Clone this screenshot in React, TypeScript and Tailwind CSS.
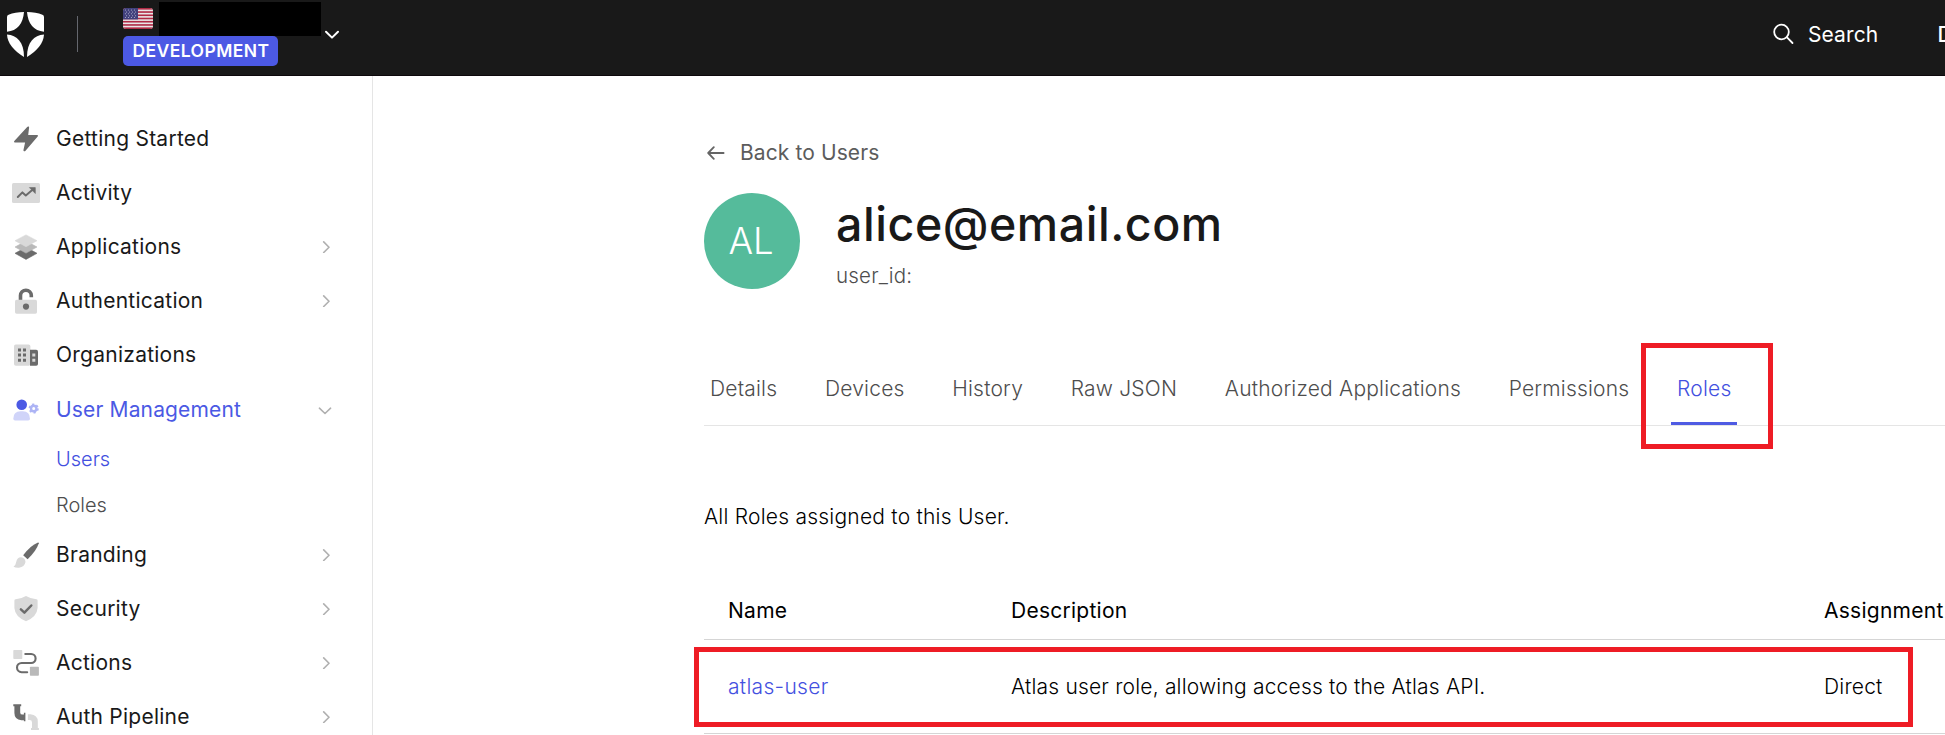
import type { ReactNode } from "react";

const DARK = "#6b6b6b";
const MID = "#b9b9b9";
const LIGHT = "#d9d9d9";

function Icon({ children }: { children: ReactNode }) {
  return (
    <svg width="26" height="26" viewBox="0 0 26 26" fill="none" className="shrink-0 overflow-visible">
      {children}
    </svg>
  );
}

const icons: Record<string, ReactNode> = {
  bolt: (
    <path
      d="M14.2 .9Q14.8 .2 15.5 .5T16.1 1.4L15.2 9H24.2Q25.6 9.3 24.7 10.5L12.3 25Q11.6 25.5 11 25.2T10.4 24.3L12.1 16.6H1.8Q.4 16.2 1.3 14.9Z"
      fill={DARK}
    />
  ),
  activity: (
    <>
      <rect x="-1" y="3" width="28" height="20" rx="1.6" fill={LIGHT} />
      <path d="M4.8 17L9.4 12.4L12.8 15.4L19.8 9.6" stroke={DARK} strokeWidth="2" strokeLinecap="round" strokeLinejoin="round" />
      <path d="M16.4 7.6H22.3V13.5Z" fill={DARK} stroke={DARK} strokeWidth=".6" strokeLinejoin="round" />
    </>
  ),
  layers: (
    <>
      <path d="M13 13.3L24 19.3L13 25.4L2 19.3Z" fill={DARK} stroke={DARK} strokeWidth=".6" strokeLinejoin="round" />
      <path d="M13 7L24 13L13 19.1L2 13Z" fill={MID} stroke={MID} strokeWidth=".6" strokeLinejoin="round" />
      <path d="M13 .9L24 6.7L13 12.7L2 6.7Z" fill={LIGHT} stroke={LIGHT} strokeWidth=".6" strokeLinejoin="round" />
    </>
  ),
  lock: (
    <>
      <path d="M7.5 13V7.6A5.4 5.4 0 0 1 18.3 7.6V9.3" stroke={DARK} strokeWidth="3.6" />
      <rect x="2" y="11.7" width="22" height="14" rx="1.6" fill={LIGHT} />
      <circle cx="13" cy="18.6" r="3.1" fill={DARK} />
    </>
  ),
  building: (
    <>
      <rect x="1" y="2.6" width="16.4" height="21.1" rx="1.8" fill={LIGHT} />
      <path d="M17 7.7H23.2Q25 7.7 25 9.5V21.9Q25 23.7 23.2 23.7H17Z" fill={DARK} />
      <path d="M5 6.5h3v3h-3zM10 6.5h3v3h-3zM5 11.6h3v3h-3zM10 11.6h3v3h-3zM5 16.8h3v3h-3zM10 16.8h3v3h-3z" fill={DARK} />
      <path d="M19.3 11.6h3v3h-3zM19.3 16.8h3v3h-3z" fill={LIGHT} />
    </>
  ),
  users: (
    <>
      <circle cx="8.7" cy="7.8" r="5.3" fill="#4b59e4" />
      <path d="M.3 21.7Q.3 14.2 7.5 14.2H9.8Q17 14.2 17 21.7Q17 23.5 15.2 23.5H2.1Q.3 23.5 .3 21.7Z" fill="#d0d4f9" />
      <circle cx="20.7" cy="11.5" r="2.7" stroke="#adb4f5" strokeWidth="2.4" />
      <circle cx="20.7" cy="11.5" r="4.2" stroke="#adb4f5" strokeWidth="1.8" strokeDasharray="2.2 2.2" />
    </>
  ),
  brush: (
    <>
      <path d="M10.2 13.3Q17.5 3.4 25 .5Q25.9 .4 25.8 1.2Q23.5 8.6 14.6 17.2Z" fill={DARK} />
      <path d="M.5 24.7Q2.8 23.3 3.2 20Q4 15.3 8 15.3Q12.4 16 12.5 20Q11.5 25 6 25.7Q2.6 25.9 .5 24.7Z" fill={LIGHT} />
    </>
  ),
  shield: (
    <>
      <path d="M13 .1Q17.8 3 23.3 3.2Q24.5 3.3 24.6 4.5V12Q24 20.7 13 25.3Q2 20.7 1.4 12V4.5Q1.5 3.3 2.7 3.2Q8.2 3 13 .1Z" fill={LIGHT} />
      <path d="M7.9 13.4L11.4 16.6L18.3 9.5" stroke={DARK} strokeWidth="2.5" strokeLinecap="round" strokeLinejoin="round" />
    </>
  ),
  actions: (
    <>
      <rect x=".3" y="0" width="9" height="9" rx=".8" fill={LIGHT} />
      <rect x="16.9" y="16.7" width="9" height="9" rx=".8" fill={MID} />
      <path d="M12.3 4H18.1A4.5 4.5 0 0 1 18.1 13H8.6A4.6 4.6 0 0 0 8.6 22.2H14.2" stroke={DARK} strokeWidth="2.1" strokeLinecap="round" />
    </>
  ),
  pipe: (
    <>
      <path d="M.3 .3H8.2V2.3H7.2V8.4Q7.2 10.6 9.4 10.6H10.9V8.8H12.4V17.2H10.9V16.2H8.4Q1.4 15.6 1.4 9V2.3H.3Z" fill={DARK} />
      <path d="M14.9 10.3H17.4Q24.8 10.9 24.8 17.6V24H25.9V25.9H18V24H19V18.4Q19 16 16.7 16H14.9Z" fill={LIGHT} />
    </>
  ),
};

type Item = { label: string; icon: string; arrow?: boolean };

const before: Item[] = [
  { label: "Getting Started", icon: "bolt" },
  { label: "Activity", icon: "activity" },
  { label: "Applications", icon: "layers", arrow: true },
  { label: "Authentication", icon: "lock", arrow: true },
  { label: "Organizations", icon: "building" },
];

const after: Item[] = [
  { label: "Branding", icon: "brush", arrow: true },
  { label: "Security", icon: "shield", arrow: true },
  { label: "Actions", icon: "actions", arrow: true },
  { label: "Auth Pipeline", icon: "pipe", arrow: true },
];

const tabs = ["Details", "Devices", "History", "Raw JSON", "Authorized Applications", "Permissions", "Roles"];

function NavRow({ item }: { item: Item }) {
  return (
    <li className="flex h-[54px] items-center pr-[42px] pl-[13px]">
      <Icon>{icons[item.icon]}</Icon>
      <span className="ml-[17px] flex-1 tracking-[0.25px]">{item.label}</span>
      {item.arrow && (
        <svg width="8" height="12" viewBox="0 0 8 12" fill="none" stroke="#b0b0b0" strokeWidth="1.6">
          <path d="M1.7 .9L7 6.2L1.7 11.5" strokeLinecap="round" strokeLinejoin="round" />
        </svg>
      )}
    </li>
  );
}

function Logo() {
  return (
    <svg width="37" height="45" viewBox="0 0 37 45" fill="#fff" className="mt-3 shrink-0">
      <path d="M0 5Q0 3.2 1.6 2.7Q8 .2 17 0Q15.5 18 0 19.8Z" />
      <path d="M37 5Q37 3.2 35.4 2.7Q29 .2 20 0Q21.5 18 37 19.8Z" />
      <path d="M0 22.4C10 23 17 30 17 45C6.5 38.5 .5 31 0 22.4Z" />
      <path d="M37 22.4C27 23 20 30 20 45C30.5 38.5 36.5 31 37 22.4Z" />
    </svg>
  );
}

function Flag() {
  return (
    <svg width="30" height="21" viewBox="0 0 30 21" className="overflow-hidden rounded-[3px]">
      <rect width="30" height="21" fill="#e9e5e6" />
      {[0, 2, 4, 6, 8, 10, 12].map((i) => (
        <rect key={i} y={i * 1.615} width="30" height="1.615" fill="#b02a45" />
      ))}
      <rect width="15" height="11.4" fill="#41407c" />
      {[0, 1, 2, 3, 4].map((r) =>
        [0, 1, 2, 3].map((c) => (
          <circle key={`${r}-${c}`} cx={2.4 + c * 3 + (r % 2) * 1.2} cy={2 + r * 1.9} r=".5" fill="#c9c9dc" />
        )),
      )}
    </svg>
  );
}

export default function App() {
  return (
    <div className="flex h-[735px] w-[1945px] flex-col overflow-hidden bg-white font-['Inter','Liberation_Sans',sans-serif] text-[21px] leading-6 text-[#191919]">
      <header className="flex h-[76px] shrink-0 items-start border-b border-[#0d080c] bg-[#191919] pl-[7px] text-white">
        <Logo />
        <div className="mt-4 ml-[33px] h-9 w-px shrink-0 bg-[#65676e]" />
        <div className="ml-[45px] flex w-[198px] shrink-0 flex-col">
          <div className="flex h-9">
            <div className="mt-2 w-9">
              <Flag />
            </div>
            <div className="mt-0.5 h-[34px] w-[162px] bg-black" />
          </div>
          <div className="flex h-[30px] w-[155px] items-center justify-center rounded-[5px] bg-[#4c59e4] pl-px text-[17.5px] font-semibold tracking-[0.45px]">
            DEVELOPMENT
          </div>
        </div>
        <svg width="16" height="10" viewBox="0 0 16 10" fill="none" stroke="#fff" strokeWidth="2" className="mt-[30px] ml-[3px] shrink-0">
          <path d="M2 1.7L8 7.6L14 1.7" strokeLinecap="round" strokeLinejoin="round" />
        </svg>
        <div className="ml-[1433px] flex shrink-0">
          <svg width="22" height="22" viewBox="0 0 22 22" fill="none" stroke="#fff" strokeWidth="1.8" className="mt-[23px]">
            <circle cx="8.5" cy="9" r="7.3" />
            <path d="M13.8 14.2L19.5 20" strokeLinecap="round" />
          </svg>
          <span className="mt-[23px] ml-[13px] w-[129.5px] tracking-[0.1px]">Search</span>
          <span className="mt-[23px] font-medium">D</span>
        </div>
      </header>

      <div className="flex min-h-0 flex-1">
        <nav className="w-[373px] shrink-0 border-r border-[#e5e5e5] pt-9">
          <ul>
            {before.map((item) => (
              <NavRow key={item.label} item={item} />
            ))}
            <li className="flex h-[54px] items-center pt-px pr-[40px] pl-[13px] text-[#4b59e4]">
              <Icon>{icons.users}</Icon>
              <span className="ml-[17px] flex-1 tracking-[0.15px]">User Management</span>
              <svg width="14" height="8" viewBox="0 0 14 8" fill="none" stroke="#b0b0b0" strokeWidth="1.6" className="mt-[3px]">
                <path d="M1.4 1.2L7 6.5L12.6 1.2" strokeLinecap="round" strokeLinejoin="round" />
              </svg>
            </li>
            <li className="flex h-[46px] items-center pl-14 text-[20px] font-light text-[#4350e0]">Users</li>
            <li className="flex h-[46px] items-center pl-14 text-[20px] font-light text-[#4d4d4d]">Roles</li>
            {after.map((item) => (
              <NavRow key={item.label} item={item} />
            ))}
          </ul>
        </nav>

        <main className="relative flex-1 overflow-hidden pt-[65px] pl-[331px]">
          <a className="flex h-6 items-center tracking-[0.1px] text-[#5c5c5c]">
            <svg width="18" height="14" viewBox="0 0 18 14" fill="none" stroke="#656565" strokeWidth="1.8" className="ml-[3px]">
              <path d="M6.8 1.2L1.2 7L6.8 12.8M1.4 7H16.6" strokeLinecap="round" strokeLinejoin="round" />
            </svg>
            <span className="ml-[15px]">Back to Users</span>
          </a>

          <div className="mt-7 flex h-24">
            <div className="flex size-24 items-center justify-center rounded-full bg-[#55bb9b] pr-0.5 text-[36.5px] font-light text-white">
              AL
            </div>
            <div className="ml-9 pt-[7px]">
              <h1 className="text-[46.5px] leading-[48px] font-medium tracking-[0.55px] text-[#191919]">alice@email.com</h1>
              <p className="mt-4 text-[20.5px] font-light tracking-[0.2px] text-[#4d4d4d]">user_id:</p>
            </div>
          </div>

          <div className="mt-16 flex h-[73px] gap-[35.7px] border-b border-[#e5e5e5] font-light tracking-[0.2px] whitespace-nowrap text-[#4d4d4d]">
            {tabs.map((tab) =>
              tab === "Roles" ? (
                <div key={tab} className="flex items-center border-b-[3px] border-[#4f5be3] px-1.5 pt-[3px] text-[#4350e0]">
                  {tab}
                </div>
              ) : (
                <div key={tab} className="flex items-center px-1.5">
                  {tab}
                </div>
              ),
            )}
          </div>

          <p className="mt-[79px] font-light tracking-[0.23px] text-black">All Roles assigned to this User.</p>

          <div className="mt-[53px]">
            <div className="grid h-[58px] grid-cols-[283px_813px_1fr] items-center border-b border-[#d5d5d5] pl-6 tracking-[0.26px] text-black">
              <span>Name</span>
              <span>Description</span>
              <span>Assignment</span>
            </div>
            <div className="grid h-[94px] grid-cols-[283px_813px_1fr] items-center border-b border-[#d5d5d5] pl-6 font-light tracking-[0.19px] text-black">
              <a className="tracking-[0.3px] text-[#4350e0]">atlas-user</a>
              <span>Atlas user role, allowing access to the Atlas API.</span>
              <span>Direct</span>
            </div>
          </div>

          <div className="absolute top-[267px] left-[1268px] h-[106px] w-[132px] border-[5px] border-[#ee1c25]" />
          <div className="absolute top-[571px] left-[321px] h-20 w-[1219px] border-[5px] border-[#ee1c25]" />
        </main>
      </div>
    </div>
  );
}
